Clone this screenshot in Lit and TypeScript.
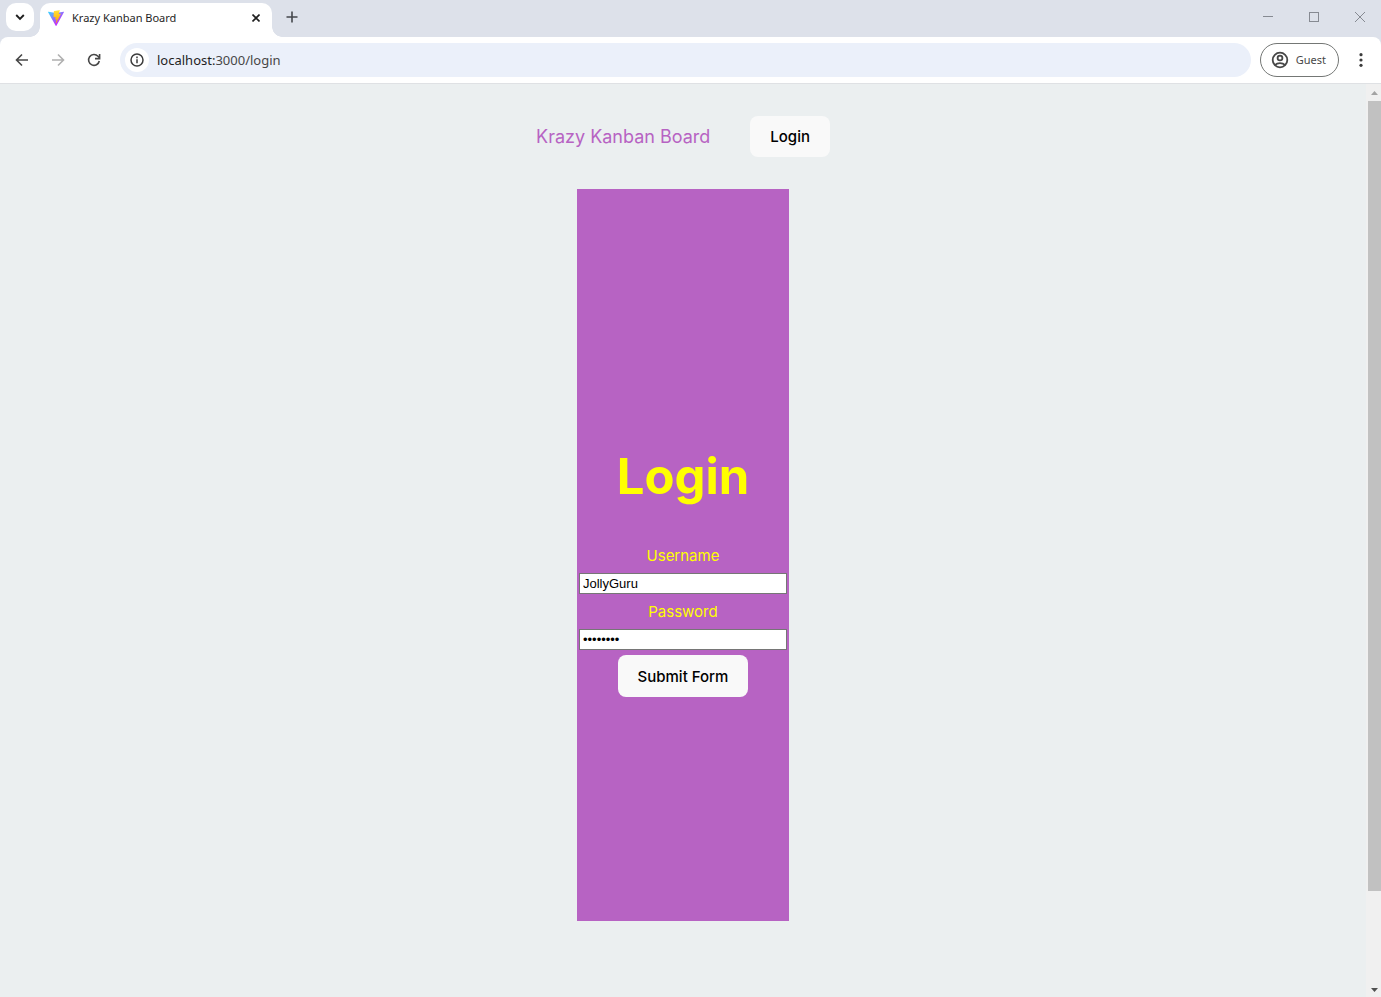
import { LitElement, html, css } from "lit";
import { customElement } from "lit/decorators.js";

@customElement("browser-tabs")
class BrowserTabs extends LitElement {
  static styles = css`
    :host { display: block; background: #dde1ea; }
    .strip { display: flex; align-items: flex-start; height: 37px; padding-left: 6px; }
    button { border: 0; padding: 0; background: none; display: grid; place-items: center; color: #1f1f1f; }
    .search { width: 28px; height: 28px; margin-top: 3px; border-radius: 10px; background: #fff; }
    .tab {
      position: relative; display: flex; align-items: center; box-sizing: border-box;
      width: 232px; height: 34px; margin: 3px 0 0 6px; padding: 0 8px 5px;
      background: #fff; border-radius: 10px 10px 0 0;
      font: 11px/16px "Noto Sans", "Open Sans", sans-serif; color: #1f1f1f;
    }
    .tab::before, .tab::after { content: ""; position: absolute; bottom: 0; width: 10px; height: 10px; }
    .tab::before { left: -10px; background: radial-gradient(circle at 0 0, transparent 9.5px, #fff 10px); }
    .tab::after { right: -10px; background: radial-gradient(circle at 100% 0, transparent 9.5px, #fff 10px); }
    .name { flex: 1; margin-left: 8px; white-space: nowrap; }
    .close { width: 16px; height: 16px; }
    .add { width: 20px; height: 20px; margin: 7px 0 0 10px; }
    .window { display: flex; gap: 4px; margin-left: auto; }
    .window button { width: 42px; height: 34px; }
    svg { display: block; }
  `;
  render() {
    return html`
      <div class="strip">
        <button class="search" aria-label="Search tabs">
          <svg width="10" height="8" viewBox="0 0 10 8" fill="none" stroke="#1f1f1f" stroke-width="1.9"><path d="M1.2 2 5 5.8 8.8 2" /></svg>
        </button>
        <div class="tab">
          <svg width="16" height="16" viewBox="0 0 256 257">
            <defs>
              <linearGradient id="v" x1="-.828%" y1="7.652%" x2="57.636%" y2="78.411%"><stop offset="0" stop-color="#41d1ff" /><stop offset="1" stop-color="#bd34fe" /></linearGradient>
              <linearGradient id="b" x1="43.376%" y1="2.242%" x2="50.316%" y2="89.03%"><stop offset="0" stop-color="#ffea83" /><stop offset="8.333%" stop-color="#ffdd35" /><stop offset="100%" stop-color="#ffa800" /></linearGradient>
            </defs>
            <path fill="url(#v)" d="M255.153 37.938L134.897 252.976c-2.483 4.440-8.862 4.466-11.382.048L.875 37.958c-2.746-4.814 1.371-10.646 6.827-9.670l120.385 21.517a6.537 6.537 0 0 0 2.322-.004l117.867-21.483c5.438-.991 9.574 4.796 6.877 9.620Z" />
            <path fill="url(#b)" d="M185.432.063L96.440 17.501a3.268 3.268 0 0 0-2.634 3.014l-5.474 92.456a3.268 3.268 0 0 0 3.997 3.378l24.777-5.718c2.318-.535 4.413 1.507 3.936 3.838l-7.361 36.047c-.495 2.426 1.782 4.500 4.151 3.780l15.304-4.649c2.372-.720 4.652 1.360 4.150 3.788l-11.698 56.621c-.732 3.542 3.979 5.473 5.943 2.437l1.313-2.028l72.516-144.720c1.215-2.423-.880-5.186-3.540-4.672l-25.505 4.922c-2.396.462-4.435-1.770-3.759-4.114l16.646-57.705c.677-2.350-1.370-4.583-3.769-4.113Z" />
          </svg>
          <span class="name">Krazy Kanban Board</span>
          <button class="close" aria-label="Close tab">
            <svg width="8" height="8" viewBox="0 0 8 8" stroke="#1f1f1f" stroke-width="1.6"><path d="m.5.5 7 7m0-7-7 7" /></svg>
          </button>
        </div>
        <button class="add" aria-label="New tab">
          <svg width="12" height="12" viewBox="0 0 12 12" stroke="#44474c" stroke-width="1.6"><path d="M6 .5v11M.5 6h11" /></svg>
        </button>
        <div class="window">
          <button aria-label="Minimize"><svg width="10" height="10" viewBox="0 0 10 10" stroke="#868a92"><path d="M0 4.500h10" /></svg></button>
          <button aria-label="Maximize"><svg width="10" height="10" viewBox="0 0 10 10" fill="none" stroke="#868a92"><rect x=".5" y=".5" width="9" height="9" /></svg></button>
          <button aria-label="Close"><svg width="10" height="10" viewBox="0 0 10 10" stroke="#868a92"><path d="m0 0 10 10M10 0 0 10" /></svg></button>
        </div>
      </div>
    `;
  }
}

@customElement("browser-toolbar")
class BrowserToolbar extends LitElement {
  static styles = css`
    :host { display: block; background: #dde1ea; }
    .bar {
      display: flex; align-items: center; box-sizing: border-box; height: 47px;
      padding: 0 10px 0 12px; background: #fff; border-bottom: 1px solid #dfe1e4; border-radius: 8px 8px 0 0;
    }
    button { border: 0; padding: 0; background: none; display: grid; place-items: center; }
    .nav { display: flex; gap: 16px; }
    .nav button { width: 20px; height: 20px; }
    .address {
      flex: 1; display: flex; align-items: center; box-sizing: border-box; height: 34px;
      margin: 0 9px 0 16px; padding: 0 5px; border-radius: 17px; background: #ebf0fa;
    }
    .info { width: 24px; height: 24px; border-radius: 50%; background: #fff; }
    .url { margin-left: 8px; font: 13px/20px "Noto Sans", "Open Sans", sans-serif; color: #474747; }
    .host { color: #1f1f1f; }
    .profile {
      display: flex; align-items: center; gap: 7px; box-sizing: border-box; height: 34px;
      padding: 0 12px 0 10px; border: 1px solid #747775; border-radius: 17px;
      font: 11px/16px "Noto Sans", "Open Sans", sans-serif; color: #474747;
    }
    .menu { width: 20px; height: 20px; margin-left: 12px; }
    svg { display: block; }
  `;
  render() {
    return html`
      <div class="bar">
        <div class="nav">
          <button aria-label="Back"><svg width="14" height="14" viewBox="0 0 14 14" fill="none" stroke="#474747" stroke-width="1.6"><path d="M13 7H2M7 1.500 1.500 7 7 12.500" /></svg></button>
          <button aria-label="Forward" disabled><svg width="14" height="14" viewBox="0 0 14 14" fill="none" stroke="#b0b0b0" stroke-width="1.6"><path d="M1 7h11M7 1.500 12.500 7 7 12.500" /></svg></button>
          <button aria-label="Reload"><svg width="14" height="14" viewBox="0 0 14 14" fill="none" stroke="#474747" stroke-width="1.6"><path d="M12.300 8A5.400 5.400 0 1 1 11 3.300L12.600 5" /><path d="M12.600 1v4.600H8" /></svg></button>
        </div>
        <div class="address">
          <button class="info" aria-label="View site information">
            <svg width="14" height="14" viewBox="0 0 14 14" fill="none" stroke="#3c3c3c" stroke-width="1.5"><circle cx="7" cy="7" r="6" /><path d="M7 6.200v4M7 3.600v1.600" /></svg>
          </button>
          <span class="url"><span class="host">localhost:</span>3000/login</span>
        </div>
        <button class="profile">
          <svg width="18" height="18" viewBox="0 0 18 18" fill="none" stroke="#474747" stroke-width="1.8"><circle cx="9" cy="9" r="7.300" /><circle cx="9" cy="7" r="2.400" /><path d="M3.800 14.100c2.800-2.700 7.600-2.700 10.400 0" /></svg>
          Guest
        </button>
        <button class="menu" aria-label="Menu">
          <svg width="4" height="14" viewBox="0 0 4 14" fill="#3c3c3c"><circle cx="2" cy="1.700" r="1.600" /><circle cx="2" cy="7" r="1.600" /><circle cx="2" cy="12.300" r="1.600" /></svg>
        </button>
      </div>
    `;
  }
}

@customElement("login-page")
class LoginPage extends LitElement {
  static styles = css`
    :host { display: block; font: 15px/25px Inter, "Liberation Sans", sans-serif; }
    nav { display: flex; justify-content: center; align-items: center; gap: 40px; padding: 32px 16px; }
    .brand { font-size: 18px; color: #b763c3; text-decoration: none; }
    button {
      box-sizing: border-box; height: 41px; padding: 0 20px; border: 0; border-radius: 8px;
      background: #f9f9f9; color: #000; font: 500 15px/25px Inter, "Liberation Sans", sans-serif;
    }
    .panel {
      display: flex; flex-direction: column; justify-content: center; width: 212px;
      min-height: calc((100vh - 82px) * 0.8); margin: 0 auto; background: #b763c3;
    }
    form { display: flex; flex-direction: column; align-items: center; color: #ff0; }
    h1 { margin: 36px 0 38px; font-size: 49px; line-height: 56px; font-weight: 700; }
    input {
      box-sizing: border-box; width: calc(100% - 4px); height: 21px; margin: 5px 2px; padding: 1px 3px;
      border: 1px solid #767676; border-radius: 0; background: #fff; color: #000;
      font: 13px/15px "Liberation Sans", Arial, sans-serif;
    }
    .submit { height: 42px; }
  `;
  render() {
    return html`
      <nav>
        <a class="brand" href="#">Krazy Kanban Board</a>
        <button type="button">Login</button>
      </nav>
      <div class="panel">
        <form @submit=${(e: Event) => e.preventDefault()}>
          <h1>Login</h1>
          <label for="username">Username</label>
          <input id="username" type="text" name="username" .value=${"JollyGuru"} />
          <label for="password">Password</label>
          <input id="password" type="password" name="password" .value=${"password"} />
          <button class="submit" type="submit">Submit Form</button>
        </form>
      </div>
    `;
  }
}

@customElement("app-root")
class AppRoot extends LitElement {
  static styles = css`
    :host { display: flex; flex-direction: column; height: 100vh; overflow: hidden; background: #ebeff0; }
    .view { flex: 1; display: flex; min-height: 0; }
    login-page { flex: 1; }
    .scroll { display: flex; flex-direction: column; align-items: flex-end; width: 15px; background: #f0f0f0; }
    .arrow { display: grid; place-items: center; width: 13px; height: 17px; }
    .thumb { width: 13px; height: 86.5%; background: #c1c1c1; }
    .down { margin-top: auto; height: 15px; }
  `;
  render() {
    return html`
      <browser-tabs></browser-tabs>
      <browser-toolbar></browser-toolbar>
      <div class="view">
        <login-page></login-page>
        <div class="scroll">
          <div class="arrow"><svg width="7" height="4" viewBox="0 0 7 4"><path fill="#a3a3a3" d="M3.500 0 7 4H0z" /></svg></div>
          <div class="thumb"></div>
          <div class="arrow down"><svg width="7" height="4" viewBox="0 0 7 4"><path fill="#505050" d="M3.500 4 7 0H0z" /></svg></div>
        </div>
      </div>
    `;
  }
}
